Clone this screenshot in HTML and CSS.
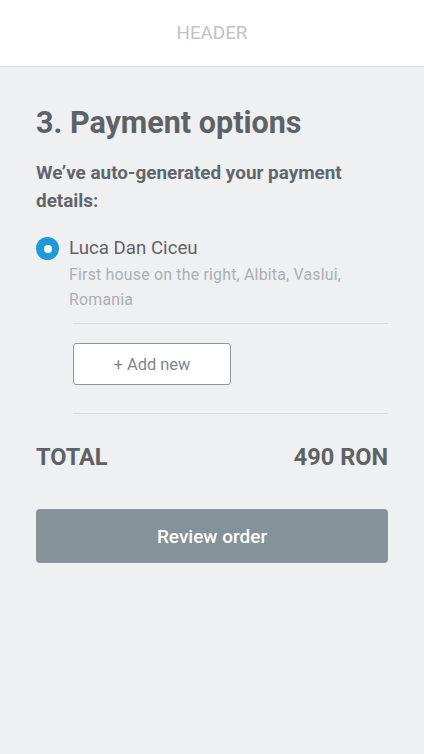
FILE: index.html
```html
<!DOCTYPE html>
<html>
<head>
<meta charset="utf-8">
<link rel="stylesheet" href="styles.css">
</head>
<body>
<header class="header">HEADER</header>
<main class="content">
  <h1 class="title">3. Payment options</h1>
  <p class="subtitle">We’ve auto-generated your payment details:</p>
  <div class="option">
    <span class="radio"><span class="dot"></span></span>
    <div class="option-text">
      <div class="name">Luca Dan Ciceu</div>
      <div class="address">First house on the right, Albita, Vaslui, Romania</div>
    </div>
  </div>
  <div class="add-block">
    <button class="add-btn">+ Add new</button>
  </div>
  <div class="total">
    <span>TOTAL</span>
    <span>490 RON</span>
  </div>
  <button class="review-btn">Review order</button>
</main>
</body>
</html>
```
FILE: styles.css
```css
* { box-sizing: border-box; }
html, body { margin: 0; padding: 0; }
body {
  background: #eff0f2;
  font-family: Roboto, "Liberation Sans", sans-serif;
  width: 424px;
  min-height: 754px;
}
.header {
  height: 67px;
  background: #ffffff;
  border-bottom: 1px solid #d9dbde;
  display: flex;
  align-items: center;
  justify-content: center;
  color: #bfc3ca;
  font-size: 18.8px;
}
.content {
  padding: 36px 36px 0 36px;
}
.title {
  margin: 0;
  font-size: 30.5px;
  font-weight: 700;
  color: #5d6266;
  line-height: 40px;
}
.subtitle {
  margin: 16px 0 0 0;
  font-size: 18.9px;
  font-weight: 700;
  color: #61666a;
  line-height: 28px;
}
.option {
  display: flex;
  margin-top: 20px;
  gap: 10px;
}
.radio {
  width: 23px;
  height: 23px;
  border-radius: 50%;
  background: #1e9bd6;
  display: flex;
  align-items: center;
  justify-content: center;
  flex: none;
  margin-top: 2px;
}
.dot {
  width: 8px;
  height: 8px;
  border-radius: 50%;
  background: #fff;
}
.name {
  font-size: 18.7px;
  color: #5f6468;
  line-height: 26px;
}
.address {
  font-size: 15.9px;
  letter-spacing: 0.2px;
  color: #abafb3;
  line-height: 25px;
  margin-top: 1px;
}
.add-block {
  margin-left: 37px;
  margin-top: 11px;
  border-top: 1px solid #d8dadd;
  border-bottom: 1px solid #d8dadd;
  padding: 19px 0 28px 0;
}
.add-btn {
  display: block;
  width: 158px;
  height: 42px;
  background: #fff;
  border: 1px solid #8b979c;
  border-radius: 3px;
  font-family: inherit;
  font-size: 16.4px;
  color: #7e878b;
  padding: 0;
}
.total {
  display: flex;
  justify-content: space-between;
  margin-top: 29px;
  font-size: 23.5px;
  font-weight: 700;
  color: #5d6266;
  line-height: 28px;
}
.review-btn {
  display: block;
  width: 100%;
  height: 54px;
  margin-top: 38px;
  background: #84929a;
  border: none;
  border-radius: 4px;
  color: #fff;
  font-family: inherit;
  font-size: 19px;
  font-weight: 500;
}
```
